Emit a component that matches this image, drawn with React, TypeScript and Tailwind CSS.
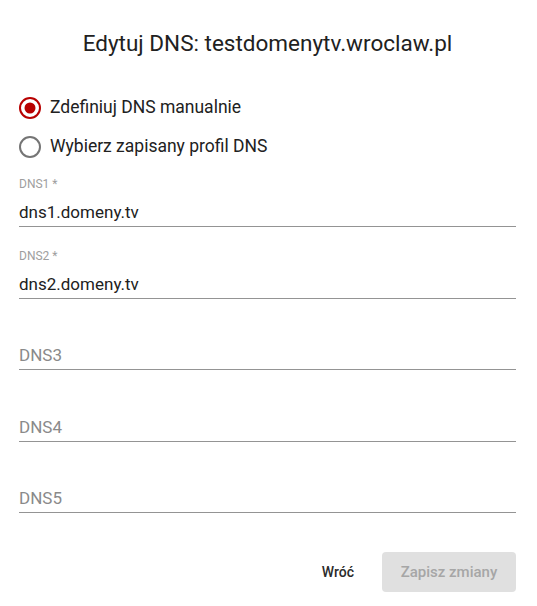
export default function App() {
  const fields = [
    { label: 'DNS1 *', value: 'dns1.domeny.tv' },
    { label: 'DNS2 *', value: 'dns2.domeny.tv' },
    { label: '', value: '', placeholder: 'DNS3' },
    { label: '', value: '', placeholder: 'DNS4' },
    { label: '', value: '', placeholder: 'DNS5' },
  ]

  return (
    <div className="min-h-screen w-[537px] bg-white font-['Roboto',sans-serif] text-[#212121]">
      <div className="pl-[19px] pr-[21px]">
        <h2 className="pt-[27px] text-center text-[22.5px] leading-8 font-normal">
          Edytuj DNS: testdomenytv.wroclaw.pl
        </h2>

        <div className="mt-[29px] flex flex-col">
          <Radio checked label="Zdefiniuj DNS manualnie" />
          <Radio label="Wybierz zapisany profil DNS" />
        </div>

        <div className="mt-3 flex flex-col gap-[22.5px]">
          {fields.map((f, i) => (
            <div key={i} className="border-b border-[#949494] pb-[2px]">
              <div className="h-3 text-[12px] leading-3 text-[#9e9e9e]">{f.label}</div>
              <div className="mt-[10px] h-6 text-[17px] leading-6">
                {f.value ? (
                  <span className="text-[#212121]">{f.value}</span>
                ) : (
                  <span className="text-[#8a8a8a]">{f.placeholder}</span>
                )}
              </div>
            </div>
          ))}
        </div>

        <div className="mt-[39px] flex items-center justify-end gap-3 pb-[14px]">
          <button className="h-10 rounded px-4 text-[14px] font-medium text-[#2b2b2b]">Wróć</button>
          <button disabled className="h-10 w-[134px] rounded bg-[#e0e0e0] text-[15px] font-medium text-[#a6a6a6]">
            Zapisz zmiany
          </button>
        </div>
      </div>
    </div>
  )
}

function Radio({ checked, label }: { checked?: boolean; label: string }) {
  return (
    <label className="flex h-[39px] items-center gap-[9px]">
      <svg width="22" height="22" viewBox="0 0 22 22">
        <circle cx="11" cy="11" r="10" fill="none" stroke={checked ? '#b80000' : '#757575'} strokeWidth="2" />
        {checked && <circle cx="11" cy="11" r="5.5" fill="#b80000" />}
      </svg>
      <span className="text-[17.5px] text-[#212121]">{label}</span>
    </label>
  )
}
